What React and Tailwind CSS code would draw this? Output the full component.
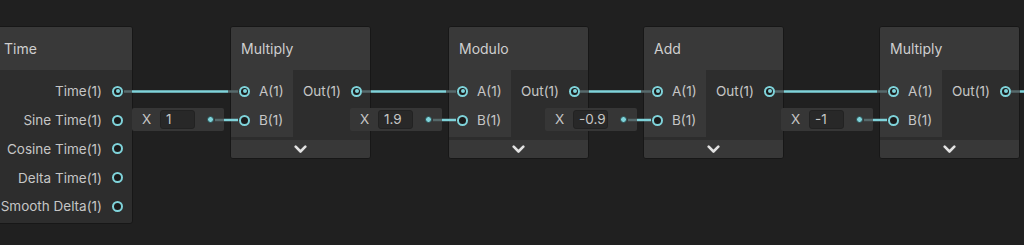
import React from 'react';

const TEAL = '#7fd3da';
const DIM = '#56696b';

function Port({ connected }) {
  return (
    <span className="relative flex h-[11px] w-[11px] shrink-0 items-center justify-center rounded-full border-2 border-[#7fd3da] bg-[#1b1b1b]">
      {connected && <span className="h-[4px] w-[4px] rounded-full bg-[#7fd3da]" />}
    </span>
  );
}

function Chevron() {
  return (
    <svg width="13" height="9" viewBox="0 0 13 9">
      <path d="M1.7 1.7 L6.5 6.5 L11.3 1.7" fill="none" stroke="#e2e2e2" strokeWidth="2.6" strokeLinecap="round" strokeLinejoin="round" />
    </svg>
  );
}

function TimeNode() {
  const outputs = [
    ['Time(1)', true],
    ['Sine Time(1)', false],
    ['Cosine Time(1)', false],
    ['Delta Time(1)', false],
    ['Smooth Delta(1)', false],
  ];
  return (
    <div className="absolute left-[-6px] top-[26px] w-[139px] overflow-hidden rounded-[3px] border border-[#171717] bg-[#2d2d2d]">
      <div className="flex h-[43px] items-center bg-[#393939] pl-[9px] text-[14px] text-[#cfcfcf]">Time</div>
      <div className="flex flex-col pt-[7px] pb-[2px]">
        {outputs.map(([label, c]) => (
          <div key={label} className="flex h-[28.75px] items-center justify-end gap-[10px] pr-[9px] text-[13.5px] text-[#c6c6c6]">
            <span>{label}</span>
            <Port connected={c} />
          </div>
        ))}
      </div>
    </div>
  );
}

function MathNode({ left, title }) {
  return (
    <div className="absolute top-[26px] w-[141px] overflow-hidden rounded-[3px] border border-[#171717] bg-[#2d2d2d]" style={{ left }}>
      <div className="flex h-[43px] items-center bg-[#393939] pl-[10px] text-[14px] text-[#cfcfcf]">{title}</div>
      <div className="flex h-[70px]">
        <div className="flex h-[67px] w-[62px] flex-col bg-[#383838] pt-[7px]">
          <div className="flex h-[28.75px] items-center gap-[9px] pl-[8px] text-[13.5px] text-[#c6c6c6]">
            <Port connected />
            <span>A(1)</span>
          </div>
          <div className="flex h-[28.75px] items-center gap-[9px] pl-[8px] text-[13.5px] text-[#c6c6c6]">
            <Port connected={false} />
            <span>B(1)</span>
          </div>
        </div>
        <div className="flex flex-1 flex-col pt-[7px]">
          <div className="flex h-[28.75px] items-center justify-end gap-[10px] pr-[8px] text-[13.5px] text-[#c6c6c6]">
            <span>Out(1)</span>
            <Port connected />
          </div>
        </div>
      </div>
      <div className="flex h-[18px] items-center justify-center bg-[#383838]">
        <Chevron />
      </div>
    </div>
  );
}

function ValueField({ left, value }) {
  return (
    <div className="absolute top-[108px] flex h-[23px] w-[92px] items-center rounded-[2px] bg-[#363636] text-[13.5px] text-[#c6c6c6]" style={{ left }}>
      <span className="w-[28px] pl-[10px]">X</span>
      <div className="flex h-[19px] w-[35px] items-center rounded-[3px] border border-[#222] bg-[#282828] pl-[5px]">{value}</div>
      <span className="ml-auto mr-[10px] h-[7px] w-[7px] rounded-full border border-[#2a4a4c] bg-[#7fd3da]" />
    </div>
  );
}

export default function App() {
  const nodes = [
    { left: 230, title: 'Multiply', value: '1' },
    { left: 448, title: 'Modulo', value: '1.9' },
    { left: 643, title: 'Add', value: '-0.9' },
    { left: 879, title: 'Multiply', value: '-1' },
  ];
  const outs = [118, 356, 574, 769, 1005];
  const nodeRights = [132, 371, 589, 784, 1020];

  return (
    <div className="relative h-[245px] w-[1024px] overflow-hidden bg-[#202020] font-['Inter','Liberation_Sans',sans-serif]">
      <TimeNode />
      {nodes.map((n) => (
        <MathNode key={n.left} left={n.left} title={n.title} />
      ))}
      {nodes.map((n) => (
        <ValueField key={'f' + n.left} left={n.left - 98} value={n.value} />
      ))}
      <svg className="pointer-events-none absolute left-0 top-0" width="1024" height="245">
        {outs.map((x, i) => {
          const next = nodes[i];
          const inX = next ? next.left + 14 : 1100;
          const nodeLeft = next ? next.left : 1100;
          return (
            <g key={x}>
              <line x1={x + 6} y1="91.5" x2={nodeRights[i]} y2="91.5" stroke={DIM} strokeWidth="2.5" />
              <line x1={nodeRights[i]} y1="91.5" x2={nodeLeft - 2} y2="91.5" stroke={TEAL} strokeWidth="2.5" />
              <line x1={nodeLeft - 2} y1="91.5" x2={inX - 6} y2="91.5" stroke={DIM} strokeWidth="2.5" />
            </g>
          );
        })}
        {nodes.map((n) => {
          const dot = n.left - 98 + 79;
          return (
            <g key={'b' + n.left}>
              <line x1={dot + 4} y1="120" x2={n.left - 6} y2="120" stroke={DIM} strokeWidth="2.5" />
              <line x1={n.left - 6} y1="120" x2={n.left + 8} y2="120" stroke={TEAL} strokeWidth="2.5" />
            </g>
          );
        })}
      </svg>
    </div>
  );
}
